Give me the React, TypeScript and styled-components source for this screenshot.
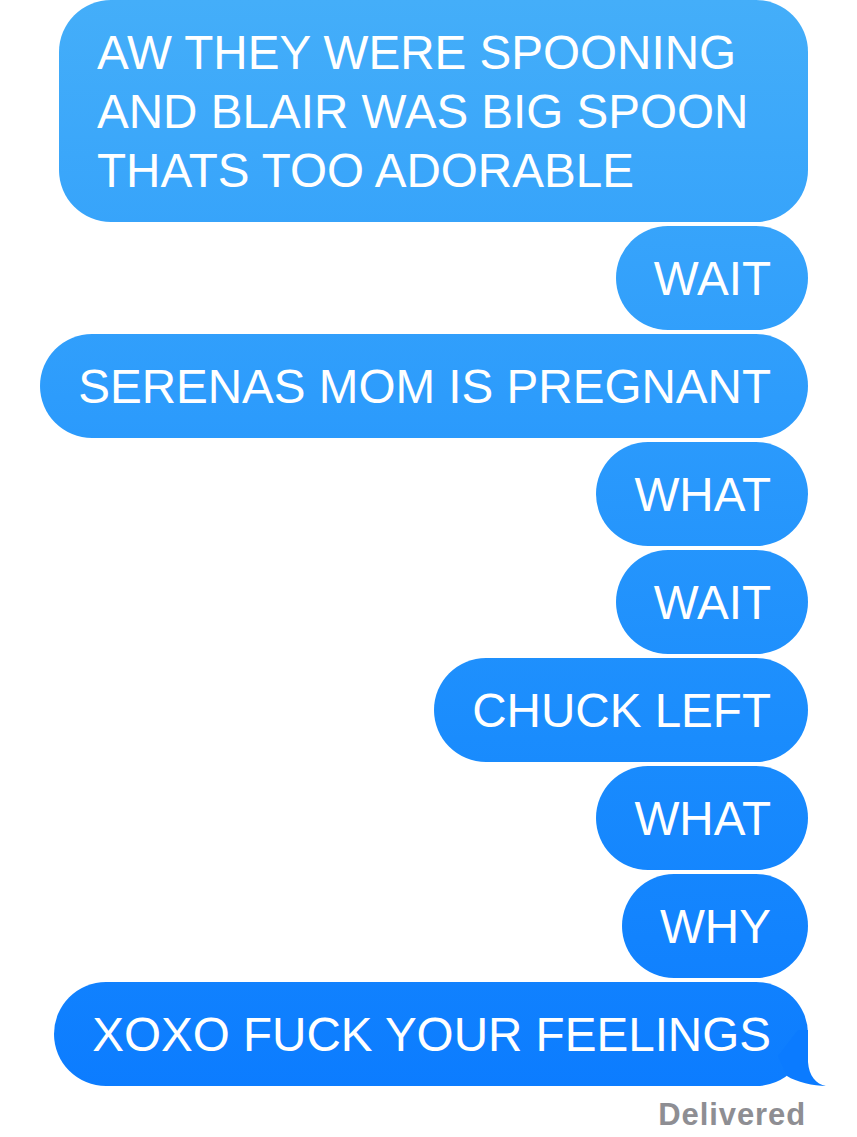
import * as React from 'react';
import styled, { createGlobalStyle } from 'styled-components';

interface Message {
    text: string;
    wrap?: boolean;
    tail?: boolean;
}

const messages: Message[] = [
    { text: 'AW THEY WERE SPOONING AND BLAIR WAS BIG SPOON THATS TOO ADORABLE', wrap: true },
    { text: 'WAIT' },
    { text: 'SERENAS MOM IS PREGNANT' },
    { text: 'WHAT' },
    { text: 'WAIT' },
    { text: 'CHUCK LEFT' },
    { text: 'WHAT' },
    { text: 'WHY' },
    { text: 'XOXO FUCK YOUR FEELINGS', tail: true },
];

export default function App() {
    return <>
        <GlobalStyle />
        <Thread>
            {messages.map((m, i) => (
                <Bubble key={i} $wrap={!!m.wrap}>
                    {m.text}
                    {m.tail && <Tail viewBox="-60 -60 80 60" width="80" height="60">
                        <path d="M 0 -56 L 0 -24 C 1 -10 8 -2 18 0 C 6 0 -12 -4 -21 -10 L -30 -30 L -10 -56 Z" />
                    </Tail>}
                </Bubble>
            ))}
            <Status>Delivered</Status>
        </Thread>
    </>
}

const GlobalStyle = createGlobalStyle`
html, body {
margin: 0;
padding: 0;
background: #fff;
}
body {
font-family: "Liberation Sans", Arial, sans-serif;
}
`

const Thread = styled.div`
display: flex;
flex-direction: column;
align-items: flex-end;
gap: 4px;
padding: 0 49px 0 0;
width: 857px;
box-sizing: border-box;
`

const Bubble = styled.div<{ $wrap: boolean }>`
position: relative;
box-sizing: border-box;
width: ${p => p.$wrap ? '749px' : 'auto'};
white-space: ${p => p.$wrap ? 'normal' : 'nowrap'};
padding: 22.5px 37px 22.5px 38px;
border-radius: 52px;
font-size: 47.6px;
line-height: 59px;
color: #fff;
background: linear-gradient(180deg, #44aef9 0%, #2d9cfc 35%, #1a8cfd 65%, #0a7aff 100%);
background-attachment: fixed;
`

const Tail = styled.svg`
position: absolute;
right: -20px;
bottom: 0;
fill: #0b7bff;
`

const Status = styled.div`
margin-top: 7px;
margin-right: 2px;
font-size: 31px;
line-height: 36px;
font-weight: bold;
letter-spacing: 0.9px;
color: #8e8e93;
`
